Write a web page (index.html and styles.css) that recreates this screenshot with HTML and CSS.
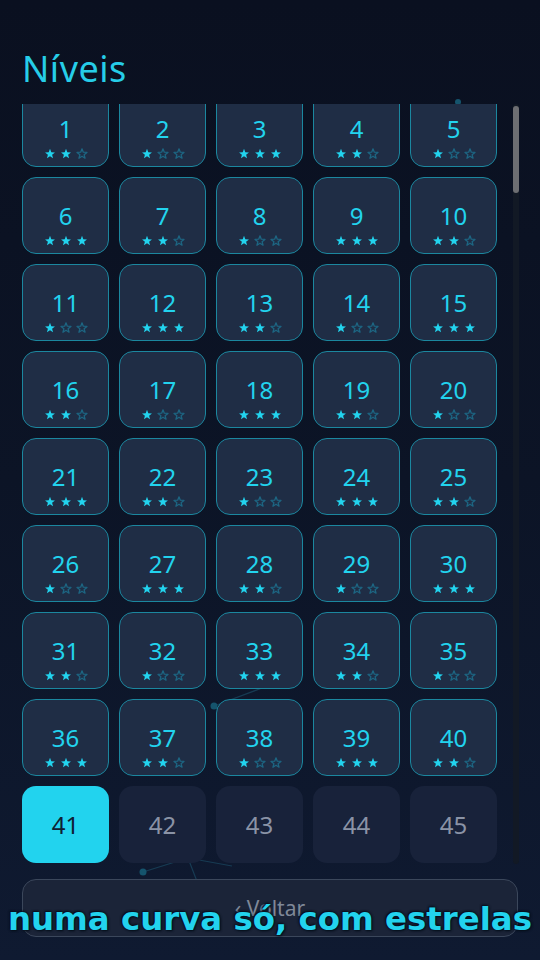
FILE: index.html
```html
<!DOCTYPE html>
<html>
<head>
    <meta charset="utf-8">
    <title>Níveis</title>
    <link rel="stylesheet" href="styles.css">
</head>
<body>
    <svg class="sky" width="540" height="960" viewBox="0 0 540 960">
        <g stroke="#1b4a63" stroke-width="1.2" fill="none" opacity="0.7">
            <path d="M143 872 L188 858 L198 884"/>
            <path d="M188 858 L232 866"/>
            <path d="M214 706 L262 688"/>
            <path d="M214 706 L236 722"/>
        </g>
        <g fill="#15546d">
            <circle cx="458" cy="102" r="3"/>
            <circle cx="214" cy="706" r="3.5"/>
            <circle cx="188" cy="858" r="3.5"/>
            <circle cx="143" cy="872" r="3.5"/>
        </g>
    </svg>

    <main class="screen">
        <h1 class="title">Níveis</h1>
        <div class="levels-wrap">
            <div class="levels" id="levels">
                <div class="level-grid" id="level-grid"></div>
            </div>
            <div class="scrollbar">
                <div class="scrollbar-thumb"></div>
            </div>
        </div>
        <button class="back-button">‹ Voltar</button>
    </main>

    <div class="caption">numa curva só, com estrelas</div>

    <script src="script.js"></script>
</body>
</html>
```

FILE: styles.css
```css
* {
    box-sizing: border-box;
}

body {
    margin: 0;
    width: 540px;
    height: 960px;
    overflow: hidden;
    background: linear-gradient(180deg, #0a1020 0%, #0c1426 50%, #0f1a31 100%);
    font-family: 'Noto Sans', 'DejaVu Sans', sans-serif;
    color: #22d3ee;
    position: relative;
}

.sky {
    position: absolute;
    left: 0;
    top: 0;
    z-index: 0;
}

.screen {
    position: relative;
    z-index: 1;
    display: flex;
    flex-direction: column;
    padding: 44px 21px 0 22px;
}

.title {
    margin: 0 0 10px 0;
    font-size: 36px;
    font-weight: 400;
    line-height: 50px;
    color: #26cde8;
    letter-spacing: 0.5px;
}

.levels-wrap {
    display: flex;
    gap: 16px;
    height: 760px;
}

.levels {
    flex: 1;
    overflow-y: scroll;
    scrollbar-width: none;
}

.levels::-webkit-scrollbar {
    display: none;
}

.scrollbar {
    width: 6px;
    background: #121925;
    border-radius: 3px;
    padding-top: 2px;
}

.scrollbar-thumb {
    height: 87px;
    background: #6d6e72;
    border-radius: 3px;
}

.level-grid {
    display: grid;
    grid-template-columns: repeat(5, 1fr);
    gap: 10px;
}

.level {
    height: 77px;
    border-radius: 14px;
    display: flex;
    flex-direction: column;
    align-items: center;
    justify-content: center;
    font-size: 24px;
    line-height: 30px;
}

.level.done {
    background: #1f2d45;
    border: 1.5px solid #1b879f;
    color: #22d3ee;
    justify-content: flex-start;
    padding-top: 23px;
}

.level.current {
    background: #22d3ee;
    color: #0f2133;
}

.level.locked {
    background: #18223a;
    color: #8a93a6;
}

.stars {
    display: flex;
    gap: 4px;
    margin-top: 4px;
}

.stars svg {
    display: block;
}

.star-on {
    fill: #22d3ee;
}

.star-off {
    fill: none;
    stroke: #1d6582;
    stroke-width: 1.3;
    stroke-linejoin: round;
}

.back-button {
    margin-top: 15px;
    margin-right: 1px;
    height: 58px;
    background: #1b2438;
    border: 1.5px solid #3b475b;
    border-radius: 14px;
    font-family: 'Noto Sans', 'DejaVu Sans', sans-serif;
    font-size: 21px;
    color: #7f8898;
}

.caption {
    position: absolute;
    left: 0;
    right: 0;
    top: 897px;
    z-index: 2;
    text-align: center;
    font-family: 'DejaVu Sans', sans-serif;
    font-weight: bold;
    font-size: 32.4px;
    line-height: 44px;
    white-space: nowrap;
    color: #22d3ee;
    text-shadow: 0 0 3px #06101c, 1px 1px 2px #06101c, -1px -1px 2px #06101c;
}
```

FILE: script.js
```js
const grid = document.getElementById('level-grid');
const current = 41;
const total = 380;
const starPoints = '6,0.8 7.29,4.22 10.95,4.39 8.09,6.68 9.06,10.21 6,8.2 2.94,10.21 3.91,6.68 1.05,4.39 4.71,4.22';

function starIcon(on) {
    const cls = on ? 'star-on' : 'star-off';
    return '<svg width="12" height="12" viewBox="0 0 12 12"><polygon class="' + cls + '" points="' + starPoints + '"/></svg>';
}

for (let n = 1; n <= total; n++) {
    const cell = document.createElement('div');
    cell.className = 'level';

    const num = document.createElement('span');
    num.textContent = n;
    cell.appendChild(num);

    if (n < current) {
        cell.classList.add('done');
        const earned = [3, 2, 1][n % 3]; // 1->2, 2->1, 3->3 estrelas
        const stars = document.createElement('span');
        stars.className = 'stars';
        let html = '';
        for (let i = 0; i < 3; i++) {
            html += starIcon(i < earned);
        }
        stars.innerHTML = html;
        cell.appendChild(stars);
    } else if (n === current) {
        cell.classList.add('current');
    } else {
        cell.classList.add('locked');
    }

    grid.appendChild(cell);
}

document.getElementById('levels').scrollTop = 14;
```
